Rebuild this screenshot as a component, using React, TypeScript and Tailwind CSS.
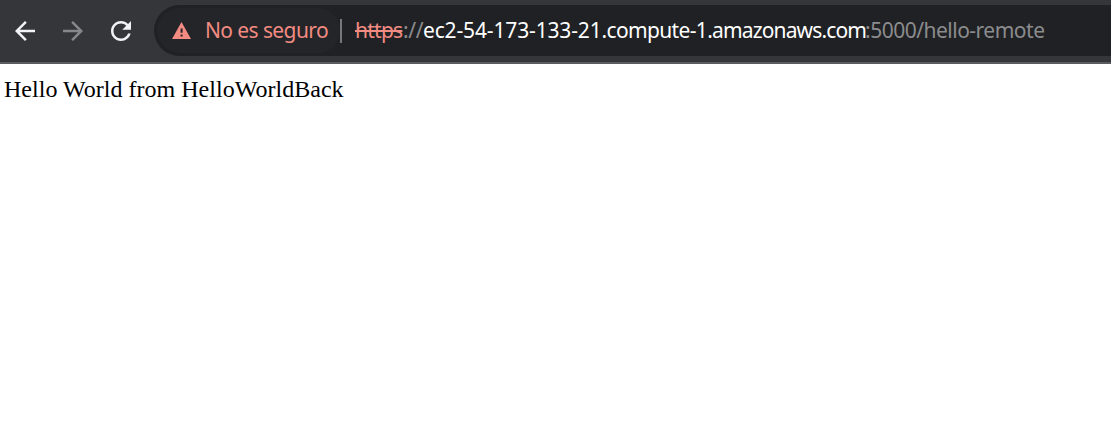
import React from "react";

const BACK = "M20 11H7.83l5.59-5.59L12 4l-8 8 8 8 1.41-1.41L7.83 13H20v-2z";
const FORWARD = "M12 4l-1.41 1.41L16.17 11H4v2h12.17l-5.58 5.59L12 20l8-8z";
const RELOAD =
  "M17.65 6.35C16.2 4.9 14.21 4 12 4c-4.42 0-7.99 3.58-7.99 8s3.57 8 7.99 8c3.73 0 6.84-2.55 7.73-6h-2.08c-.82 2.33-3.04 4-5.65 4-3.31 0-6-2.69-6-6s2.69-6 6-6c1.66 0 3.14.69 4.22 1.78L13 11h7V4l-2.35 2.35z";

function NavIcon({ path, className }: { path: string; className: string }) {
  return (
    <button className="block h-[30px] w-[30px] shrink-0">
      <svg viewBox="0 0 24 24" className={`h-[30px] w-[30px] ${className}`} fill="currentColor">
        <path d={path} />
      </svg>
    </button>
  );
}

export default function App() {
  return (
    <div className="h-[426px] w-full overflow-hidden bg-white">
      <header className="flex h-16 items-start overflow-hidden border-b-2 border-[#5b5c60] bg-[#35363a] pt-[5px] pl-[10px] font-['Noto_Sans',sans-serif]">
        <nav className="flex h-[51px] w-[144px] shrink-0 items-center gap-[18px]">
          <NavIcon path={BACK} className="text-[#f1f3f4]" />
          <NavIcon path={FORWARD} className="text-[#86878a]" />
          <NavIcon path={RELOAD} className="text-[#f1f3f4]" />
        </nav>
        <div className="flex h-[51px] grow items-center overflow-hidden rounded-l-full bg-[#202124] pl-[3px] text-[21px] leading-[30px] whitespace-nowrap">
          <div className="flex h-[45px] w-[183px] shrink-0 items-center rounded-full bg-[#242528] pl-[15px] text-[#f28b82]">
            <svg viewBox="0 0 19 17" className="mr-[14px] h-[17px] w-[19px] shrink-0">
              <path d="M9.5 0L19 17H0z" fill="currentColor" />
              <path d="M8.6 6.5h2v4.3h-2zM8.6 12.4h2v2.1h-2z" fill="#242528" />
            </svg>
            <span className="w-[123px] pb-px tracking-[-0.6px]">No es seguro</span>
          </div>
          <div className="h-6 w-[2px] shrink-0 bg-[#77787b]" />
          <div className="flex pb-px pl-[13px] text-[#8b8c8e]">
            <span className="w-[48px] tracking-[-0.75px] text-[#f28b82] line-through decoration-2">https</span>
            <span className="w-[20px] tracking-[-0.3px]">://</span>
            <span className="w-[442px] text-white">
              <span className="tracking-[-0.15px]">ec2-54-173-133-21</span>
              <span className="tracking-[-0.65px]">.compute-1</span>
              <span className="tracking-[-0.85px]">.amazonaws.com</span>
            </span>
            <span className="tracking-[-0.5px]">:5000/hello-remote</span>
          </div>
        </div>
      </header>
      <main className="px-1 pt-[11px] font-['Liberation_Serif',serif] text-[24px] leading-7 tracking-[0.02px] text-black">
        Hello World from HelloWorldBack
      </main>
    </div>
  );
}
